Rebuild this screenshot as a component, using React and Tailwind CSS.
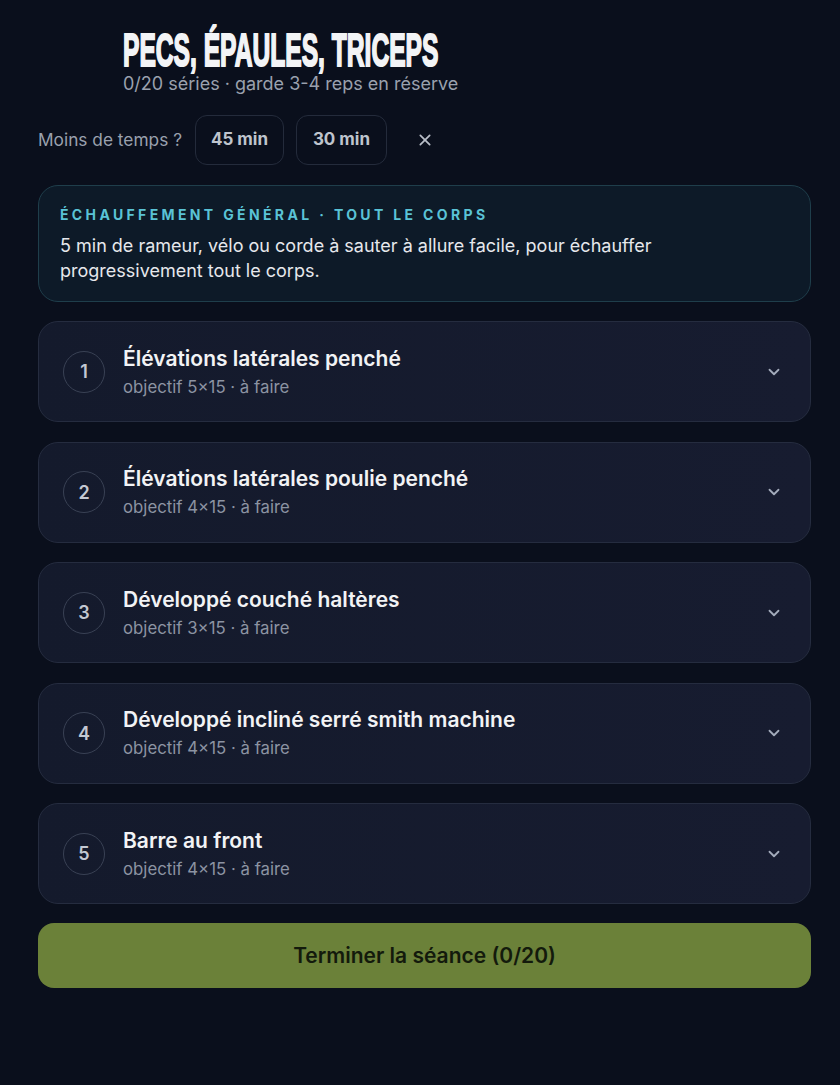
import React from "react";

const exercises = [
  { n: 1, name: "Élévations latérales penché", sub: "objectif 5×15 · à faire" },
  { n: 2, name: "Élévations latérales poulie penché", sub: "objectif 4×15 · à faire" },
  { n: 3, name: "Développé couché haltères", sub: "objectif 3×15 · à faire" },
  { n: 4, name: "Développé incliné serré smith machine", sub: "objectif 4×15 · à faire" },
  { n: 5, name: "Barre au front", sub: "objectif 4×15 · à faire" },
];

function Chevron() {
  return (
    <svg width="18" height="18" viewBox="0 0 24 24" fill="none" stroke="#a3abbb" strokeWidth="2.4" strokeLinecap="round" strokeLinejoin="round">
      <path d="M6 9l6 6 6-6" />
    </svg>
  );
}

export default function App() {
  return (
    <div className="min-h-[1085px] w-full bg-[#0a0f1c] font-['Inter','Noto_Sans',sans-serif] text-white">
      <div className="ml-[38px] w-[773px] pt-[30px]">
        <div className="pl-[85px]">
          <h1 className="h-[40px] origin-left scale-x-[0.535] whitespace-nowrap font-['Liberation_Sans','Arial',sans-serif] text-[46px] font-bold leading-[40px] text-[#f3f4f6] [-webkit-text-stroke:2px_#f3f4f6]">
            PECS, ÉPAULES, TRICEPS
          </h1>
          <p className="mt-[2px] text-[18px] leading-[24px] text-[#9aa1ae]">
            0/20 séries · garde 3-4 reps en réserve
          </p>
        </div>

        <div className="mt-[19px] flex items-center">
          <span className="text-[17.3px] text-[#9aa1ae]">Moins de temps ?</span>
          <button className="ml-[13px] h-[50px] w-[89px] rounded-[12px] border border-[#242b3b] text-[17px] font-bold text-[#bfc4cd]">
            45 min
          </button>
          <button className="ml-[12px] h-[50px] w-[91px] rounded-[12px] border border-[#242b3b] text-[17px] font-bold text-[#bfc4cd]">
            30 min
          </button>
          <button className="ml-[26px] flex h-[24px] w-[24px] items-center justify-center">
            <svg width="16" height="16" viewBox="0 0 24 24" fill="none" stroke="#b9bec8" strokeWidth="2.6" strokeLinecap="round">
              <path d="M5 5l14 14M19 5L5 19" />
            </svg>
          </button>
        </div>

        <div className="mt-[20px] rounded-[20px] border border-[#1f3e4b] bg-[#0d1a28] px-[21px] pb-[18px] pt-[20px]">
          <div className="text-[14px] font-bold leading-[18px] tracking-[0.24em] text-[#5ac3d6]">
            ÉCHAUFFEMENT GÉNÉRAL · TOUT LE CORPS
          </div>
          <p className="mt-[9px] text-[18px] leading-[25px] text-[#e6e8ec]">
            5 min de rameur, vélo ou corde à sauter à allure facile, pour échauffer progressivement tout le corps.
          </p>
        </div>

        <div className="mt-[19px] flex flex-col gap-[19.5px]">
          {exercises.map((e) => (
            <div
              key={e.n}
              className="flex h-[101px] items-center rounded-[20px] border border-[#252c3f] bg-gradient-to-r from-[#141a2c] to-[#171c30] pl-[24px] pr-[27px]"
            >
              <div className="flex h-[42px] w-[42px] shrink-0 items-center justify-center rounded-full border border-[#394154] text-[18px] font-semibold text-[#c3c8d2]">
                {e.n}
              </div>
              <div className="ml-[18px] flex-1">
                <div className="text-[21px] font-semibold leading-[28px] text-[#f2f3f5]">{e.name}</div>
                <div className="mt-[2px] text-[16.8px] leading-[24px] text-[#8c93a2]">{e.sub}</div>
              </div>
              <Chevron />
            </div>
          ))}
        </div>

        <button className="mt-[19px] flex h-[65px] w-full items-center justify-center rounded-[16px] bg-[#6b8139] text-[21px] font-semibold text-[#131a0c]">
          Terminer la séance (0/20)
        </button>
      </div>
    </div>
  );
}
